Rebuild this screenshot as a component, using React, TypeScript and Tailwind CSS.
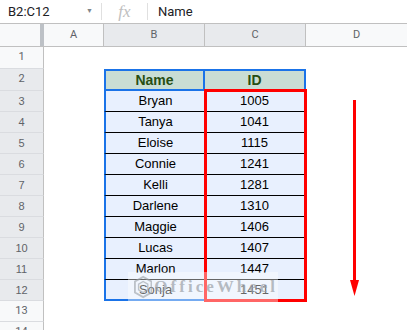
const people = [
  { name: 'Bryan', id: 1005 },
  { name: 'Tanya', id: 1041 },
  { name: 'Eloise', id: 1115 },
  { name: 'Connie', id: 1241 },
  { name: 'Kelli', id: 1281 },
  { name: 'Darlene', id: 1310 },
  { name: 'Maggie', id: 1406 },
  { name: 'Lucas', id: 1407 },
  { name: 'Marlon', id: 1447 },
  { name: 'Sonja', id: 1451 },
]

function RowHead({ n, selected }: { n: number; selected?: boolean }) {
  return (
    <div
      className={`w-[44px] shrink-0 flex items-center justify-center border-r border-b border-r-[#c0c0c0] border-b-[#dadce0] text-[11px] text-[#5f6368] ${
        selected ? 'bg-[#e8eaed]' : 'bg-[#f8f9fa]'
      }`}
    >
      {n}
    </div>
  )
}

export default function App() {
  return (
    <div
      className="relative w-[407px] h-[330px] overflow-hidden bg-white"
      style={{ fontFamily: 'Roboto, "Liberation Sans", sans-serif' }}
    >
      {/* formula bar */}
      <div className="h-[24px] flex items-center border-b border-[#c0c0c0] text-[13px] text-[#202124]">
        <div className="w-[101px] shrink-0 flex items-center justify-between pl-[8px] pr-[8px]">
          <span>B2:C12</span>
          <span className="text-[7px] text-[#80868b]">▼</span>
        </div>
        <div className="w-px h-[17px] bg-[#e0e0e0]" />
        <div className="w-[45px] shrink-0 flex items-center justify-center">
          <span className="italic text-[17px] text-[#c0c0c0]" style={{ fontFamily: '"Liberation Serif", serif' }}>
            fx
          </span>
        </div>
        <div className="w-px h-[17px] bg-[#e0e0e0]" />
        <span className="pl-[10px]">Name</span>
      </div>

      {/* column headers */}
      <div className="h-[23px] flex border-b border-[#c0c0c0] text-[11px] text-[#5f6368]">
        <div className="w-[44px] shrink-0 bg-[#f8f9fa] border-r-4 border-[#bdc1c6]" />
        <div className="w-[60px] shrink-0 flex items-center justify-center bg-[#f8f9fa] border-r border-[#c0c0c0]">A</div>
        <div className="w-[101px] shrink-0 flex items-center justify-center bg-[#e8eaed] border-r border-[#c0c0c0]">B</div>
        <div className="w-[101px] shrink-0 flex items-center justify-center bg-[#e8eaed] border-r border-[#c0c0c0]">C</div>
        <div className="flex-1 flex items-center justify-center bg-[#f8f9fa]">D</div>
      </div>

      {/* row 1 */}
      <div className="h-[22px] flex">
        <RowHead n={1} />
      </div>

      {/* row 2: table header */}
      <div className="h-[22px] flex">
        <RowHead n={2} selected />
        <div className="w-[60px] shrink-0" />
        <div className="w-[101px] shrink-0 flex items-center justify-center bg-[#c9ddd4] border-2 border-[#1a73e8] text-[14px] font-bold text-[#274e13]" style={{ fontFamily: '"Liberation Sans", Arial, sans-serif' }}>
          Name
        </div>
        <div className="w-[101px] shrink-0 flex items-center justify-center bg-[#c9ddd4] border-2 border-l-0 border-[#1a73e8] text-[14px] font-bold text-[#274e13]" style={{ fontFamily: '"Liberation Sans", Arial, sans-serif' }}>
          ID
        </div>
      </div>

      {/* data rows */}
      {people.map((p, i) => {
        const last = i === people.length - 1
        return (
          <div key={p.name} className="h-[21px] flex" style={{ fontFamily: '"Liberation Sans", Arial, sans-serif' }}>
            <RowHead n={i + 3} selected />
            <div className="w-[60px] shrink-0" />
            <div
              className={`w-[101px] shrink-0 flex items-center justify-center bg-[#e8f0fe] border-l-2 border-l-[#1a73e8] text-[13px] text-black ${
                last ? 'border-b-2 border-b-[#1a73e8]' : 'border-b border-b-black'
              }`}
            >
              {p.name}
            </div>
            <div
              className={`w-[101px] shrink-0 flex items-center justify-center bg-[#e8f0fe] border-r-2 border-r-[#1a73e8] text-[13px] text-black ${
                last ? 'border-b-2 border-b-[#1a73e8]' : 'border-b border-b-black'
              }`}
            >
              {p.id}
            </div>
          </div>
        )
      })}

      {/* rows 13-14 */}
      <div className="h-[21px] flex">
        <RowHead n={13} />
      </div>
      <div className="h-[21px] flex">
        <RowHead n={14} />
      </div>

      {/* red highlight box around C3:C12 */}
      <div className="absolute left-[204px] top-[89px] w-[103px] h-[213px] border-[3px] border-[#ff0000]" />

      {/* red arrow */}
      <svg className="absolute left-[348px] top-[100px]" width="14" height="197" viewBox="0 0 14 197">
        <rect x="5" y="0" width="3" height="182" fill="#ff0000" />
        <polygon points="2,180 11,180 6.5,196" fill="#ff0000" />
      </svg>

      {/* watermark */}
      <div className="absolute left-[128px] top-[272px] w-[150px] h-[30px] bg-white/40 flex items-center pl-[6px] gap-[2px]">
        <svg width="20" height="24" viewBox="0 0 20 24" className="opacity-60">
          <polygon points="10,1 19,6 19,18 10,23 1,18 1,6" fill="none" stroke="#9aa0a6" strokeWidth="2" />
          <polygon points="10,6 15,9 15,15 10,18 5,15 5,9" fill="none" stroke="#9aa0a6" strokeWidth="1.5" />
        </svg>
        <span
          className="text-[17px] font-bold tracking-[3px] text-[#9aa0a6]/70"
          style={{ fontFamily: '"Liberation Serif", serif' }}
        >
          OfficeWheel
        </span>
      </div>
    </div>
  )
}
